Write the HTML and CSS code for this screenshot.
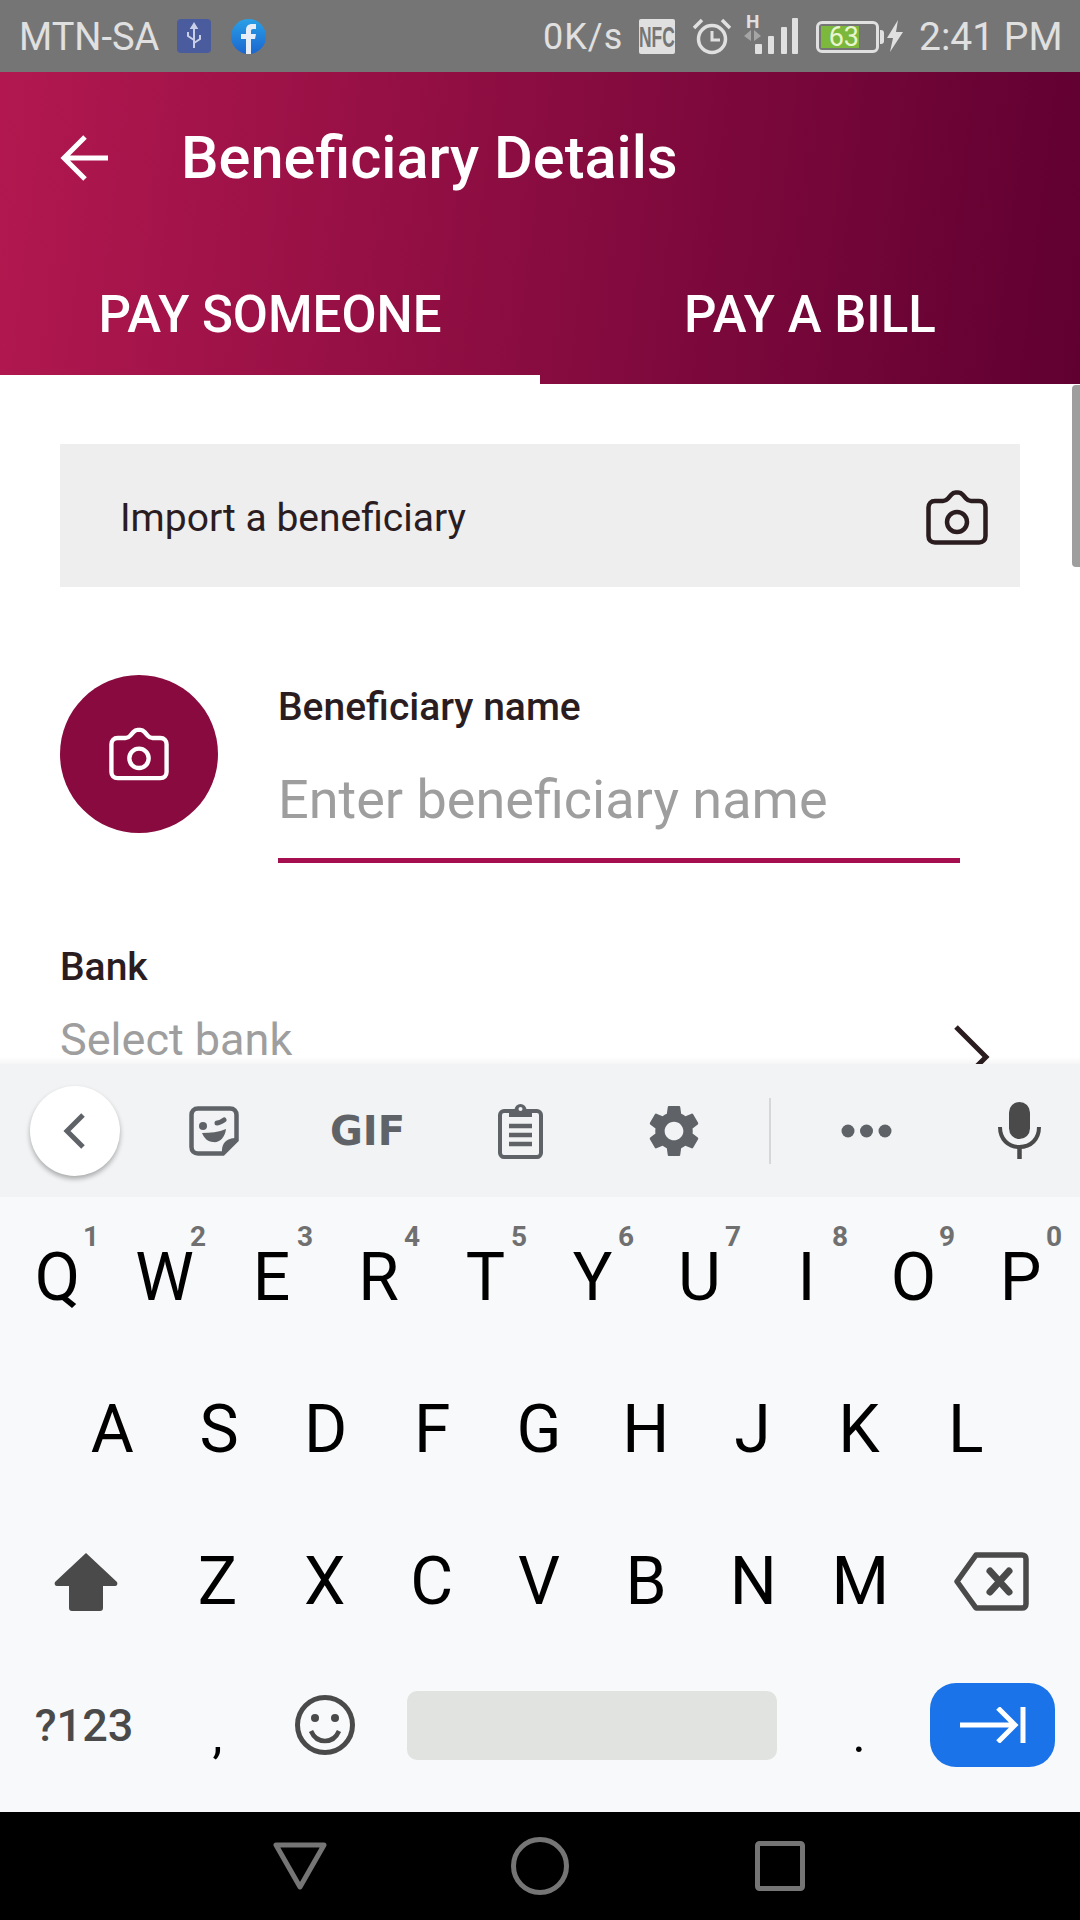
FILE: index.html
```html
<!DOCTYPE html>
<html lang="en">
<head>
<meta charset="utf-8">
<title>Beneficiary Details</title>
<link rel="stylesheet" href="styles.css">
</head>
<body>
<div class="page">
  <div class="status">
    <span class="st-carrier">MTN-SA</span>
    <svg class="st-usb" viewBox="0 0 34 34"><rect width="34" height="34" rx="4" fill="#4a5b9e"/><path d="M17 5v24M17 5l-2.500 4h5zM17 21l-6-4v-4M17 24l6-4v-4" fill="none" stroke="#c9cfe8" stroke-width="2"/></svg>
    <svg class="st-fb" viewBox="0 0 35 35"><defs><linearGradient id="fbg" x1="0" y1="0" x2="0" y2="1"><stop offset="0" stop-color="#2aa0e6"/><stop offset="1" stop-color="#1a66d0"/></linearGradient></defs><circle cx="17.500" cy="17.500" r="17.500" fill="url(#fbg)"/><path d="M15 35V20h-5v-5h5v-4c0-4 2.500-6 6-6h4v5h-3c-1.500 0-2 .7-2 2v3h5l-1 5h-4v15z" fill="#e8eef8"/></svg>
    <span class="st-speed">0K/s</span>
    <span class="st-nfc"><span class="st-nfc-t">NFC</span></span>
    <svg class="st-alarm" viewBox="0 0 38 37"><circle cx="19" cy="21" r="13.500" fill="none" stroke="#e0e0e0" stroke-width="3.500"/><path d="M19 13v9h8" fill="none" stroke="#e0e0e0" stroke-width="3"/><path d="M1 10 9 2M37 10 29 2" stroke="#e0e0e0" stroke-width="3.500"/></svg>
    <div class="st-signal">
      <span class="st-h">H</span>
      <svg class="st-bars" viewBox="0 0 54 36"><path d="M7 12v11l-7-5zM10 12v11l7-5z" fill="#a5a5a5"/><rect x="11" y="26" width="7" height="10" rx="1" fill="#e0e0e0"/><rect x="24" y="18" width="6" height="18" rx="1" fill="#e0e0e0"/><rect x="37" y="9" width="6" height="27" rx="1" fill="#e0e0e0"/><rect x="48" y="0" width="6" height="36" rx="1" fill="#e0e0e0"/></svg>
    </div>
    <div class="st-battery"><span class="st-level">63</span></div>
    <svg class="st-bolt" viewBox="0 0 16 32"><path d="M11 0 0 18h6L3 32 16 12h-7z" fill="#e0e0e0"/></svg>
    <span class="st-time">2:41 PM</span>
  </div>

  <header class="head">
    <div class="appbar">
      <svg class="back" viewBox="0 0 50 50"><path d="M48 25H5M25 4 4 25l21 21" fill="none" stroke="#fff" stroke-width="5"/></svg>
      <h1 class="title">Beneficiary Details</h1>
    </div>
    <div class="tabs">
      <div class="tab">PAY SOMEONE</div>
      <div class="tab">PAY A BILL</div>
      <div class="indicator"></div>
    </div>
  </header>

  <main class="content">
    <div class="scrollbar"></div>
    <div class="import">
      <span class="import-text">Import a beneficiary</span>
      <svg class="cam" viewBox="0 0 62 55"><path d="M9 11h8c2 0 3.500-.8 5-2.500l3-3.500c1.500-1.700 2.500-2.500 4.500-2.500h3c2 0 3 .8 4.500 2.500l3 3.500c1.500 1.700 3 2.500 5 2.500h8c4 0 6.500 2.500 6.500 6.500V46c0 4-2.500 6.500-6.500 6.500H9c-4 0-6.500-2.500-6.500-6.500V17.500C2.500 13.500 5 11 9 11z" fill="none" stroke="#2b1d1f" stroke-width="4.500"/><circle cx="31" cy="32" r="10" fill="none" stroke="#2b1d1f" stroke-width="4.500"/></svg>
    </div>
    <div class="ben">
      <div class="avatar">
        <svg class="cam-small" viewBox="0 0 62 55"><path d="M9 11h8c2 0 3.500-.8 5-2.500l3-3.500c1.500-1.700 2.500-2.500 4.500-2.500h3c2 0 3 .8 4.500 2.500l3 3.500c1.500 1.700 3 2.500 5 2.500h8c4 0 6.500 2.500 6.500 6.500V46c0 4-2.500 6.500-6.500 6.500H9c-4 0-6.500-2.500-6.500-6.500V17.500C2.500 13.500 5 11 9 11z" fill="none" stroke="#fff" stroke-width="4.500"/><circle cx="31" cy="32" r="10" fill="none" stroke="#fff" stroke-width="4.500"/></svg>
      </div>
      <div class="ben-field">
        <div class="label">Beneficiary name</div>
        <div class="placeholder">Enter beneficiary name</div>
        <div class="underline"></div>
      </div>
    </div>
    <div class="bank">
      <div class="label">Bank</div>
      <div class="bank-row">
        <span class="select">Select bank</span>
        <svg class="chev" viewBox="0 0 36 64"><path d="M2 2 32 32 2 62" fill="none" stroke="#2b1d1f" stroke-width="5"/></svg>
      </div>
    </div>
  </main>

  <section class="keyboard">
    <div class="fade"></div>
    <div class="toolbar">
      <div class="pill"><svg class="pill-chev" viewBox="0 0 24 36"><path d="M20 2 4 18l16 16" fill="none" stroke="#5f6368" stroke-width="5"/></svg></div>
      <svg class="tb-sticker" viewBox="0 0 50 50"><path d="M9 2.500h32c4 0 6.500 2.500 6.500 6.500v25L34 47.500H9c-4 0-6.500-2.500-6.500-6.500V9C2.500 5 5 2.500 9 2.500z" fill="none" stroke="#5f6368" stroke-width="4.500"/><path d="M49 32 33 49c-.5-7 .5-11 4-14 3-2.500 7-3 12-3z" fill="#5f6368"/><circle cx="14" cy="20" r="4" fill="#5f6368"/><path d="M28 17c2 0 4-1 7-3" fill="none" stroke="#5f6368" stroke-width="5" stroke-linecap="round"/><path d="M13 27c8 0 17-1 24-4-1 9-7 14-13 13-5 0-9-4-11-9z" fill="#5f6368"/></svg>
      <span class="tb-gif">GIF</span>
      <svg class="tb-clip" viewBox="0 0 45 56"><path d="M6 8h33c2 0 4 2 4 4v38c0 2-2 4-4 4H6c-2 0-4-2-4-4V12c0-2 2-4 4-4z" fill="none" stroke="#5f6368" stroke-width="4"/><path d="M11 8h23v6H11z" fill="#5f6368"/><circle cx="22.500" cy="7" r="6" fill="#5f6368"/><circle cx="22.500" cy="6" r="2" fill="#f1f3f4"/><path d="M11 23h23M11 32h23M11 41h23" stroke="#5f6368" stroke-width="4.500"/></svg>
      <svg class="tb-gear" viewBox="2 2 20 20"><path fill="#5f6368" d="M19.140 12.940c.04-.3.06-.61.06-.94 0-.32-.02-.64-.07-.94l2.030-1.580c.18-.14.23-.41.12-.61l-1.920-3.320c-.12-.22-.37-.29-.59-.22l-2.390.96c-.5-.38-1.030-.7-1.620-.94l-.36-2.540c-.04-.24-.24-.41-.48-.41h-3.840c-.24 0-.43.17-.47.41l-.36 2.540c-.59.24-1.130.57-1.620.94l-2.390-.96c-.22-.08-.47 0-.59.22L2.740 8.870c-.12.21-.08.47.12.61l2.030 1.580c-.05.3-.09.63-.09.94s.02.64.07.94l-2.030 1.580c-.18.14-.23.41-.12.61l1.920 3.320c.12.22.37.29.59.22l2.390-.96c.5.38 1.030.7 1.620.94l.36 2.540c.05.24.24.41.48.41h3.840c.24 0 .44-.17.47-.41l.36-2.540c.59-.24 1.130-.56 1.620-.94l2.390.96c.22.08.47 0 .59-.22l1.920-3.320c.12-.22.07-.47-.12-.61l-2.010-1.580zM12 15.600c-1.980 0-3.600-1.620-3.600-3.600s1.620-3.600 3.600-3.600 3.600 1.620 3.600 3.600-1.620 3.600-3.600 3.600z"/></svg>
      <div class="tb-divider"></div>
      <svg class="tb-dots" viewBox="0 0 51 14"><circle cx="7" cy="7" r="6.500" fill="#5f6368"/><circle cx="25.500" cy="7" r="6.500" fill="#5f6368"/><circle cx="44" cy="7" r="6.500" fill="#5f6368"/></svg>
      <svg class="tb-mic" viewBox="0 0 43 57"><rect x="11" y="0" width="21" height="37" rx="10.500" fill="#4a4a4a"/><path d="M2 25c0 12 8 20 19.500 20S41 37 41 25" fill="none" stroke="#4a4a4a" stroke-width="4"/><path d="M21.500 44v13" stroke="#4a4a4a" stroke-width="4.500"/></svg>
    </div>
    <div class="keys">
      <div class="row">
        <div class="key">Q<sup class="hint">1</sup></div>
        <div class="key">W<sup class="hint">2</sup></div>
        <div class="key">E<sup class="hint">3</sup></div>
        <div class="key">R<sup class="hint">4</sup></div>
        <div class="key">T<sup class="hint">5</sup></div>
        <div class="key">Y<sup class="hint">6</sup></div>
        <div class="key">U<sup class="hint">7</sup></div>
        <div class="key">I<sup class="hint">8</sup></div>
        <div class="key">O<sup class="hint">9</sup></div>
        <div class="key">P<sup class="hint">0</sup></div>
      </div>
      <div class="row row-mid">
        <div class="key">A</div><div class="key">S</div><div class="key">D</div><div class="key">F</div><div class="key">G</div><div class="key">H</div><div class="key">J</div><div class="key">K</div><div class="key">L</div>
      </div>
      <div class="row">
        <div class="key key-wide"><svg class="shift" viewBox="0 0 64 59"><path d="M32 1 63 30c1 2 0 4-2 4H49v22c0 2-1 3-3 3H18c-2 0-3-1-3-3V34H3c-2 0-3-2-2-4z" fill="#4a4a4a"/></svg></div>
        <div class="key">Z</div><div class="key">X</div><div class="key">C</div><div class="key">V</div><div class="key">B</div><div class="key">N</div><div class="key">M</div>
        <div class="key key-wide"><svg class="bksp" viewBox="0 0 75 59"><path d="M22 3h46c2.500 0 4 1.500 4 4v45c0 2.500-1.500 4-4 4H22L3 29.500z" fill="none" stroke="#4a4a4a" stroke-width="5.500" stroke-linejoin="round"/><path d="M36 19l19 21M55 19 36 40" stroke="#4a4a4a" stroke-width="7" stroke-linecap="round"/></svg></div>
      </div>
      <div class="row row-last">
        <div class="key key-wide key-sym">?123</div>
        <div class="key key-punct">,</div>
        <div class="key"><svg class="emoji" viewBox="0 0 60 60"><circle cx="30" cy="30" r="27.500" fill="none" stroke="#4a4a4a" stroke-width="5"/><circle cx="20" cy="23" r="4" fill="#4a4a4a"/><circle cx="40" cy="23" r="4" fill="#4a4a4a"/><path d="M16 36c3 7 8 10 14 10s11-3 14-10" fill="none" stroke="#4a4a4a" stroke-width="4.500"/></svg></div>
        <div class="space"></div>
        <div class="key key-punct key-dot">.</div>
        <div class="enter"><svg class="enter-ico" viewBox="0 0 66 36"><path d="M0 18h55M38 1l17 17-17 17" fill="none" stroke="#fff" stroke-width="5"/><path d="M63 0v36" stroke="#fff" stroke-width="5"/></svg></div>
      </div>
    </div>
  </section>

  <nav class="navbar">
    <svg class="nav-back" viewBox="0 0 54 48"><path d="M3 3h48L27 45z" fill="none" stroke="#757575" stroke-width="5" stroke-linejoin="round"/></svg>
    <svg class="nav-home" viewBox="0 0 58 58"><circle cx="29" cy="29" r="26.500" fill="none" stroke="#757575" stroke-width="5"/></svg>
    <svg class="nav-recent" viewBox="0 0 50 50"><rect x="2.500" y="2.500" width="45" height="45" rx="2" fill="none" stroke="#757575" stroke-width="5"/></svg>
  </nav>
</div>
</body>
</html>
```
FILE: styles.css
```css
* { box-sizing: border-box; }
html, body { margin: 0; padding: 0; }
body { font-family: Roboto, "Liberation Sans", sans-serif; background: #fff; }
.page { width: 1080px; height: 1920px; display: flex; flex-direction: column; overflow: hidden; }

/* status bar */
.status { height: 72px; background: #757575; display: flex; align-items: center; padding-left: 19px; color: #e0e0e0; flex: none; }
.st-carrier { font-size: 38px; width: 142px; white-space: nowrap; padding-top: 2px; }
.st-usb { width: 34px; height: 34px; margin-left: 16px; }
.st-fb { width: 35px; height: 35px; margin-left: 20px; }
.st-speed { font-size: 36px; margin-left: 277px; width: 80px; letter-spacing: 1px; white-space: nowrap; padding-top: 2px; }
.st-nfc { width: 36px; height: 35px; margin-left: 16px; background: #e0e0e0; border-radius: 2px; display: flex; align-items: center; justify-content: center; overflow: hidden; }
.st-nfc-t { display: inline-block; transform: scaleX(.58); font: 700 30px/35px "Liberation Sans", sans-serif; color: #757575; }
.st-alarm { width: 38px; height: 37px; margin-left: 18px; }
.st-signal { position: relative; width: 54px; height: 36px; margin-left: 13px; }
.st-h { position: absolute; left: 2px; top: -6px; font: 700 19px/19px Roboto, sans-serif; color: #e0e0e0; }
.st-bars { display: block; width: 54px; height: 36px; }
.st-battery { width: 63px; height: 32px; margin-left: 18px; margin-top: 2px; border: 3px solid #e0e0e0; border-radius: 6px; padding: 2px; position: relative; flex: none; }
.st-battery::after { content: ""; position: absolute; right: -8px; top: 6px; width: 4px; height: 14px; background: #e0e0e0; border-radius: 0 3px 3px 0; }
.st-level { display: block; width: 38px; height: 22px; background: #7cb83c; color: #e8f5d0; font-size: 27px; line-height: 22px; text-align: right; white-space: nowrap; }
.st-bolt { width: 16px; height: 32px; margin-left: 8px; }
.st-time { font-size: 39px; margin-left: 16px; white-space: nowrap; padding-top: 2px; }

/* header */
.head { flex: none; height: 312px; background: linear-gradient(97deg, #b2184f 0%, #600031 100%); color: #fff; }
.appbar { height: 172px; display: flex; align-items: center; padding-left: 60px; }
.back { width: 50px; height: 50px; }
.title { margin: 0 0 0 71px; font-size: 59.500px; font-weight: 500; white-space: nowrap; }
.tabs { height: 140px; display: flex; position: relative; }
.tab { flex: 1; display: flex; align-items: center; justify-content: center; font-size: 51px; font-weight: 500; }
.indicator { position: absolute; left: 0; bottom: 0; width: 540px; height: 9px; background: #fff; }

/* content */
.content { flex: none; height: 680px; position: relative; padding: 60px 60px 0; background: #fff; overflow: hidden; color: #2b1d1f; }
.scrollbar { position: absolute; right: 0; top: 1px; width: 8px; height: 182px; background: #9e9e9e; border-radius: 4px 0 0 4px; }
.import { height: 143px; width: 960px; background: #eee; display: flex; align-items: center; justify-content: space-between; padding: 0 32px 0 60px; }
.import-text { font-size: 39px; padding-top: 5px; }
.cam { width: 62px; height: 55px; margin-top: 3px; }
.ben { display: flex; margin-top: 88px; }
.avatar { width: 158px; height: 158px; border-radius: 50%; background: #880a3e; display: flex; align-items: center; justify-content: center; flex: none; }
.cam-small { width: 60px; height: 56px; }
.ben-field { margin-left: 60px; width: 682px; padding-top: 8px; }
.label { font-size: 39px; font-weight: 500; line-height: 48px; }
.placeholder { font-size: 54px; color: #9e9e9e; line-height: 62px; margin-top: 38px; }
.underline { height: 5px; background: #a50f50; margin-top: 27px; }
.bank { margin-top: 80px; }
.bank-row { display: flex; justify-content: space-between; align-items: flex-start; margin-top: 25px; padding-right: 30px; }
.select { font-size: 45px; color: #9e9e9e; line-height: 48px; }
.chev { width: 36px; height: 64px; margin-top: 9px; }

/* keyboard */
.keyboard { flex: none; height: 748px; background: #f8f9fa; position: relative; display: flex; flex-direction: column; }
.fade { position: absolute; left: 0; right: 0; top: -7px; height: 7px; background: linear-gradient(rgba(0,0,0,0), rgba(0,0,0,.04)); }
.toolbar { height: 133px; background: #f1f3f4; display: flex; align-items: center; padding-left: 30px; flex: none; }
.pill { width: 90px; height: 90px; border-radius: 50%; background: #fff; box-shadow: 0 3px 5px rgba(0,0,0,.3); display: flex; align-items: center; justify-content: center; flex: none; }
.pill-chev { width: 24px; height: 36px; }
.tb-sticker { width: 50px; height: 50px; margin-left: 69px; }
.tb-gif { width: 71px; margin-left: 91px; font: 700 40px/1 "DejaVu Sans", sans-serif; color: #5f6368; white-space: nowrap; }
.tb-clip { width: 45px; height: 56px; margin-left: 97px; }
.tb-gear { width: 52px; height: 52px; margin-left: 105px; }
.tb-divider { width: 2px; height: 66px; margin-left: 69px; background: #d5d7d9; }
.tb-dots { width: 51px; height: 14px; margin-left: 70px; }
.tb-mic { width: 43px; height: 57px; margin-left: 106px; }
.keys { flex: 1; display: flex; flex-direction: column; padding-top: 4px; }
.row { flex: none; height: 152px; display: flex; padding: 0 5px; align-items: stretch; }
.row-mid { padding: 0 60px; }
.key { flex: 1 1 0; display: flex; align-items: center; justify-content: center; font-size: 66px; color: #000; position: relative; padding-right: 2px; }
.key-wide { flex: 0 0 160px; }
.hint { position: absolute; right: 13px; top: 22px; font-size: 28px; font-weight: 700; line-height: 1; color: #707070; vertical-align: baseline; }
.shift { width: 64px; height: 59px; margin-left: 4px; }
.bksp { width: 75px; height: 59px; margin-right: 4px; }
.key-sym { font-size: 45px; font-weight: 500; color: #4a4a4a; }
.row-last { flex: 1; height: auto; padding: 0 25px 19px 5px; }
.row-last .key { flex: 0 0 107px; }
.row-last .key-wide { flex: 0 0 160px; }
.key-punct { font-size: 50px; padding-top: 20px; }
.emoji { width: 60px; height: 60px; }
.space { width: 370px; height: 69px; align-self: center; background: #e1e3e1; border-radius: 10px; margin-left: 28px; }
.row-last .key-dot { flex: 0 0 166px; }
.enter { width: 125px; height: 84px; align-self: center; background: #1a73e8; border-radius: 26px; display: flex; align-items: center; justify-content: center; margin-left: -13px; }
.enter-ico { width: 66px; height: 36px; }

/* nav bar */
.navbar { flex: none; height: 108px; background: #000; display: flex; align-items: center; padding-left: 273px; }
.nav-back { width: 54px; height: 48px; }
.nav-home { width: 58px; height: 58px; margin-left: 184px; }
.nav-recent { width: 50px; height: 50px; margin-left: 186px; }
```
